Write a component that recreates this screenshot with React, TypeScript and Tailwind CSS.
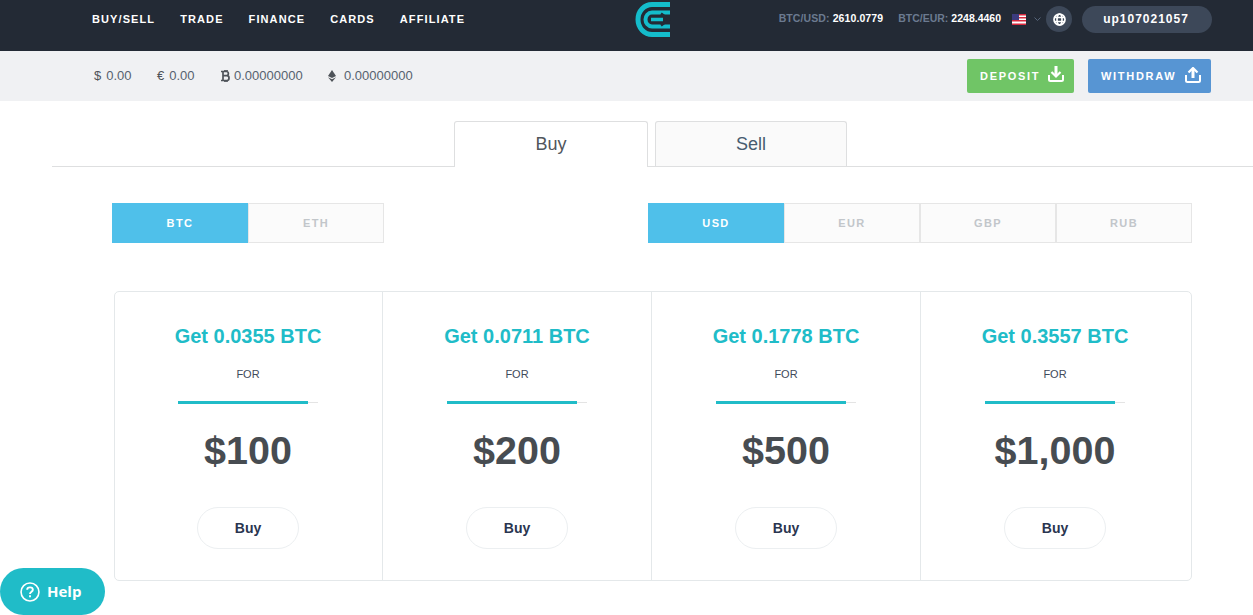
import React from "react";

const Logo = () => (
  <svg width="36" height="38" viewBox="0 0 36 38" fill="none">
    <path d="M35 4.500H17C9.500 4.500 3 11 3 19.500C3 28 9.500 34.500 17 34.500H35" stroke="#14bccb" strokeWidth="5" />
    <path d="M35 12.500H17C13 12.500 10.500 16 10.500 19.500C10.500 23 13 26.500 17 26.500H35" stroke="#14bccb" strokeWidth="4" />
    <path d="M16 19.500H28" stroke="#14bccb" strokeWidth="3.500" />
    <path d="M26 13.500L34 19.500L26 25.500" stroke="#232a35" strokeWidth="2.500" />
  </svg>
);

const Flag = () => (
  <svg width="14" height="11" viewBox="0 0 14 11">
    <rect width="14" height="11" fill="#fff" />
    <rect y="0" width="14" height="1.500" fill="#d8283c" />
    <rect y="3" width="14" height="1.500" fill="#d8283c" />
    <rect y="6" width="14" height="1.500" fill="#d8283c" />
    <rect y="9.500" width="14" height="1.500" fill="#d8283c" />
    <rect width="7" height="6" fill="#3c3b7e" />
  </svg>
);

const Globe = () => (
  <svg width="13" height="13" viewBox="0 0 13 13" fill="none" stroke="#fff" strokeWidth="1.700">
    <circle cx="6.500" cy="6.500" r="5.500" />
    <ellipse cx="6.500" cy="6.500" rx="2.500" ry="5.500" />
    <path d="M1 4.500H12M1 8.500H12" />
  </svg>
);

const DownloadIcon = () => (
  <svg className="mt-[-5px]" width="16" height="16" viewBox="0 0 16 16" fill="none" stroke="#fff" strokeWidth="2">
    <path d="M1 9V13.500C1 14.500 1.500 15 2.500 15H13.500C14.500 15 15 14.500 15 13.500V9" />
    <path d="M8 0V9" strokeWidth="3" />
    <path d="M3.500 6L8 10.500L12.500 6" strokeWidth="2.200" />
  </svg>
);

const UploadIcon = () => (
  <svg className="mt-[-3px]" width="16" height="16" viewBox="0 0 16 16" fill="none" stroke="#fff" strokeWidth="2">
    <path d="M1 8V13.500C1 14.500 1.500 15 2.500 15H13.500C14.500 15 15 14.500 15 13.500V8" />
    <path d="M8 11V2" strokeWidth="3" />
    <path d="M3.500 5.500L8 1L12.500 5.500" strokeWidth="2.200" />
  </svg>
);

const Bitcoin = () => (
  <svg width="9" height="12" viewBox="0 0 9 12" fill="none" stroke="#4e5359" strokeWidth="1.700">
    <path d="M0 1.500H5.500C8 1.500 8 5.700 5.500 5.700H2M2 5.700H6C8.700 5.700 8.700 10.500 6 10.500H0M2 1.500V10.500M4 0V1.500M6 0V1.500M4 10.500V12M6 10.500V12" />
  </svg>
);

const Eth = () => (
  <svg width="8" height="12" viewBox="0 0 8 12">
    <path d="M4 0L8 6L4 8L0 6Z" fill="#4e5359" />
    <path d="M0 7.300L4 9.300L8 7.300L4 12Z" fill="#4e5359" />
  </svg>
);

const nav = ["BUY/SELL", "TRADE", "FINANCE", "CARDS", "AFFILIATE"];

const offers = [
  { get: "Get 0.0355 BTC", price: "$100", cls: "flex flex-col items-center pr-[1px]" },
  { get: "Get 0.0711 BTC", price: "$200", cls: "flex flex-col items-center border-l border-[#e4e8ea]" },
  { get: "Get 0.1778 BTC", price: "$500", cls: "flex flex-col items-center border-l border-[#e4e8ea]" },
  { get: "Get 0.3557 BTC", price: "$1,000", cls: "flex flex-col items-center border-l border-[#e4e8ea] pr-[2px]" },
];

const Choice = ({ label, active, cls }: { label: string; active?: boolean; cls: string }) => (
  <div
    className={
      active
        ? `flex h-10 items-center justify-center bg-[#4fc0ea] text-[11px] font-bold tracking-[1.400px] text-white ${cls}`
        : `flex h-10 items-center justify-center border border-[#e6e6e6] bg-[#fbfbfb] text-[11px] font-bold tracking-[1.400px] text-[#c2c6ca] ${cls}`
    }
  >
    {label}
  </div>
);

export default function App() {
  return (
    <div className="relative h-[615px] w-[1253px] overflow-hidden bg-white font-['Liberation_Sans',Arial,sans-serif]">
      <header className="flex h-[51px] bg-[#232a35] pl-[92px] pr-[41px]">
        <nav className="flex h-[38px] w-[543px] items-center gap-[25px] text-[11px] font-bold tracking-[1.100px] text-white">
          {nav.map((n) => (
            <span key={n}>{n}</span>
          ))}
        </nav>
        <div className="w-[36px]">
          <Logo />
        </div>
        <div className="ml-auto flex h-[38px] items-center text-[10.500px] font-bold">
          <span className="tracking-[0.100px] text-[#6b7a90]">BTC/USD:</span>
          <span className="ml-[3px] tracking-[0.100px] text-white">2610.0779</span>
          <span className="ml-[15px] text-[#6b7a90]">BTC/EUR:</span>
          <span className="ml-[3px] text-white">2248.4460</span>
          <span className="ml-[11px] flex">
            <Flag />
          </span>
          <svg className="ml-[8px]" width="7" height="5" viewBox="0 0 7 5" fill="none" stroke="#56657a">
            <path d="M0.500 0.500L3.500 3.500L6.500 0.500" />
          </svg>
          <span className="ml-[5px] flex h-[26px] w-[26px] items-center justify-center rounded-full bg-[#3d4859]">
            <Globe />
          </span>
          <span className="ml-[10px] flex h-[27px] w-[130px] items-center justify-center rounded-full bg-[#3d4859] pr-[2px] text-[12px] tracking-[1px] text-white">
            up107021057
          </span>
        </div>
      </header>

      <div className="flex h-[50px] items-center bg-[#f0f1f3] pl-[94px] pr-[42px] text-[13px] text-[#56626f]">
        <span className="flex w-[63px] items-center gap-[5px]">
          <span className="text-[#4e5359]">$</span>0.00
        </span>
        <span className="flex w-[64px] items-center gap-[5px]">
          <span className="text-[#4e5359]">€</span>0.00
        </span>
        <span className="flex w-[107px] items-center gap-[4px]">
          <Bitcoin />
          0.00000000
        </span>
        <span className="flex items-center gap-[8px]">
          <Eth />
          0.00000000
        </span>
        <div className="ml-auto flex gap-[14px] text-[11px] font-bold tracking-[1.700px] text-white">
          <span className="flex h-[34px] w-[107px] items-center gap-[8px] rounded-[2px] bg-[#70c566] pl-[13px]">
            DEPOSIT <DownloadIcon />
          </span>
          <span className="flex h-[34px] w-[123px] items-center gap-[9px] rounded-[2px] bg-[#5795d3] pl-[13px]">
            WITHDRAW <UploadIcon />
          </span>
        </div>
      </div>

      <div className="ml-[52px] mt-[20px] flex h-[46px] gap-[7px] border-b border-[#dedfe0] pl-[402px]">
        <div className="flex h-[46px] w-[194px] items-center justify-center rounded-t-[3px] border border-b-0 border-[#dedfe0] bg-white text-[18px] text-[#51565c]">
          Buy
        </div>
        <div className="flex h-[45px] w-[192px] items-center justify-center rounded-t-[3px] border border-b-0 border-[#dedfe0] bg-[#fafafa] text-[18px] text-[#475c70]">
          Sell
        </div>
      </div>

      <div className="ml-[112px] mt-[36px] flex w-[1080px] justify-between">
        <div className="flex">
          <Choice label="BTC" active cls="w-[136px]" />
          <Choice label="ETH" cls="w-[136px]" />
        </div>
        <div className="flex">
          <Choice label="USD" active cls="w-[136px]" />
          <Choice label="EUR" cls="w-[136px]" />
          <Choice label="GBP" cls="w-[136px]" />
          <Choice label="RUB" cls="w-[136px]" />
        </div>
      </div>

      <div className="ml-[114px] mt-[48px] grid h-[290px] w-[1078px] grid-cols-[267px_269px_269px_1fr] rounded-[5px] border border-[#e4e8ea]">
        {offers.map((o) => (
          <div key={o.price} className={o.cls}>
            <div className="mt-[31px] text-[20px] font-bold leading-[26px] text-[#20bcc8]">{o.get}</div>
            <div className="mt-[19px] text-[11px] leading-[13px] text-[#3f4a5a]">FOR</div>
            <div className="mt-[20px] flex h-[3px] w-[140px] items-center bg-[linear-gradient(#e4e4e4,#e4e4e4)] bg-[length:100%_1px] bg-center bg-no-repeat">
              <div className="h-[3px] w-[130px] bg-[#20bcc8]" />
            </div>
            <div className="mt-[23px] text-[39.500px] font-bold leading-[46px] text-[#474c51]">{o.price}</div>
            <div className="mt-[34px] flex h-[42px] w-[102px] items-center justify-center rounded-full border border-[#eceff1] text-[14px] font-bold text-[#2a3550]">
              Buy
            </div>
          </div>
        ))}
      </div>

      <div className="absolute bottom-0 left-0 flex h-[47px] w-[105px] items-center gap-[7px] rounded-[24px] bg-[#20bcc8] pl-[20px] font-['Open_Sans',sans-serif] text-[15px] font-bold text-white">
        <svg width="20" height="20" viewBox="0 0 21 21" fill="none" stroke="#fff" strokeWidth="1.700">
          <circle cx="10.500" cy="10.500" r="9.400" />
          <path d="M7.500 8.200C7.500 4.800 13.500 4.800 13.500 8.200C13.500 10.300 10.500 10.300 10.500 12.700" strokeWidth="2" />
          <path d="M10.500 14V16" strokeWidth="2" />
        </svg>
        <span>Help</span>
      </div>
    </div>
  );
}
